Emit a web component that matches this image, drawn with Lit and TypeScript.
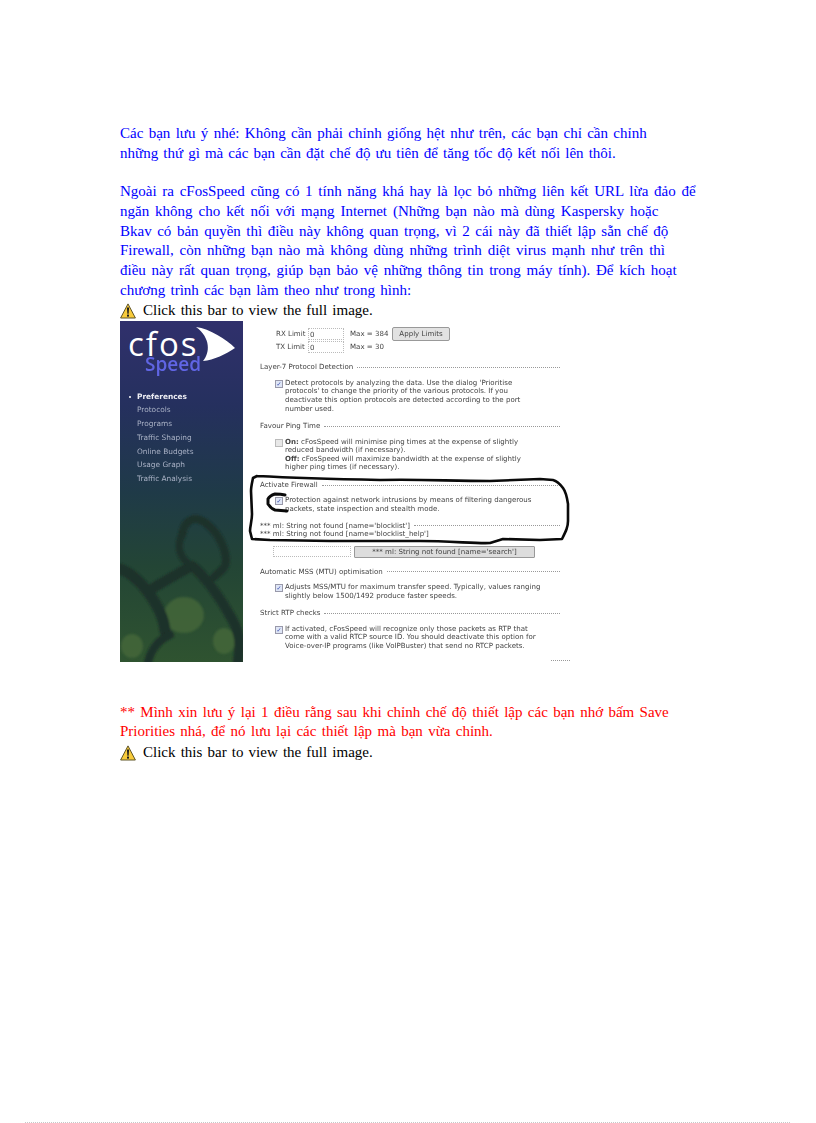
import { LitElement, html, css, svg } from "lit";
import { customElement } from "lit/decorators.js";

const warn = html`<svg class="warn" viewBox="0 0 16 16" width="16" height="16" aria-hidden="true">
  <path d="M8 .9 15.4 15H.6Z" fill="#f8cb3a" stroke="#5f5426" stroke-width="1" stroke-linejoin="round"/>
  <path d="M6.9 4.6h2.2l-.5 6.2h-1.2Z" fill="#1c1c1c"/><rect x="7" y="11.6" width="2" height="2" fill="#1c1c1c"/>
</svg>`;

const chains = svg`<svg class="art" viewBox="0 0 123 341" preserveAspectRatio="none" aria-hidden="true">
  <defs>
    <linearGradient id="bg" x1="0" y1="0" x2="0" y2="1">
      <stop offset="0" stop-color="#30306c"/>
      <stop offset=".25" stop-color="#25305e"/>
      <stop offset=".5" stop-color="#1f3a48"/>
      <stop offset=".72" stop-color="#234535"/>
      <stop offset="1" stop-color="#2f5330"/>
    </linearGradient>
    <filter id="soft"><feGaussianBlur stdDeviation="1"/></filter>
  </defs>
  <rect width="123" height="341" fill="url(#bg)"/>
  <g filter="url(#soft)">
    <g fill="#46683a" opacity=".75">
      <ellipse cx="64" cy="294" rx="20" ry="18"/>
      <ellipse cx="104" cy="320" rx="11" ry="13"/>
      <ellipse cx="12" cy="325" rx="11" ry="12"/>
    </g>
    <g fill="none" stroke="#1e3029" stroke-linecap="round" stroke-linejoin="round">
      <path d="M0 248C8 250 20 260 28 271S44 295 45 310" stroke-width="11"/>
      <path d="M28 270C42 262 58 252 72 245 84 254 100 276 112 298S118 330 118 341" stroke-width="10"/>
      <path d="M62 214C64 200 74 192 88 204S106 232 106 240 100 250 94 256" stroke-width="8"/>
      <path d="M62 214C56 226 60 238 72 245" stroke-width="7"/>
      <path d="M28 341C32 326 40 318 50 314" stroke-width="8"/>
    </g>
  </g>
</svg>`;

const scribbles = svg`<svg class="ink" viewBox="0 0 455 341" aria-hidden="true">
  <g fill="none" stroke="#0a0a0a" stroke-linecap="round" stroke-linejoin="round">
    <path stroke-width="2.6" d="M137 155 133 157C132 162 131 166 131 170L132 193C132 200 130 205 130 210L132 218 150 219 210 220 300 220C330 220 360 223 370 222L383 218 420 219 442 218C446 210 448 206 448 200V183C447 176 446 171 443 167 440 163 437 160 433 159L420 158 370 160C330 160 300 158 260 159 210 158 175 157 137 155"/>
    <path stroke-width="3" d="M165 174C161 173 158 173 155 173 152 174 149 176 148 178V183C150 186 152 188 155 189L167 190"/>
  </g>
</svg>`;

const blue: [string, number][] = [
  ["Các bạn lưu ý nhé: Không cần phải chỉnh giống hệt như trên, các bạn chỉ cần chỉnh", 1.6],
  ["những thứ gì mà các bạn cần đặt chế độ ưu tiên để tăng tốc độ kết nối lên thôi.", 1.35],
  ["", 0],
  ["Ngoài ra cFosSpeed cũng có 1 tính năng khá hay là lọc bỏ những liên kết URL lừa đảo để", 1.95],
  ["ngăn không cho kết nối với mạng Internet (Những bạn nào mà dùng Kaspersky hoặc", 2.2],
  ["Bkav có bản quyền thì điều này không quan trọng, vì 2 cái này đã thiết lập sẵn chế độ", 1.8],
  ["Firewall, còn những bạn nào mà không dùng những trình diệt virus mạnh như trên thì", 2.1],
  ["điều này rất quan trọng, giúp bạn bảo vệ những thông tin trong máy tính). Để kích hoạt", 2],
  ["chương trình các bạn làm theo như trong hình:", 1.5],
];
const red: [string, number][] = [
  ["** Mình xin lưu ý lại 1 điều rằng sau khi chỉnh chế độ thiết lập các bạn nhớ bấm Save", 1.6],
  ["Priorities nhá, để nó lưu lại các thiết lập mà bạn vừa chỉnh.", 1.6],
];

@customElement("app-root")
export class AppRoot extends LitElement {
  static styles = css`
    :host { display: block; width: 816px; height: 1123px; background: #fff; overflow: hidden; position: relative; }
    .page { padding: 124px 0 0 120px; font: 15px/19.75px "Liberation Serif", serif; }
    .line { white-space: nowrap; height: 19.75px; }
    .line.empty { height: 18.5px; }
    .blue { color: #0000ff; }
    .red { color: #ff0000; margin-bottom: 1px; }
    .bar { display: flex; align-items: center; gap: 7px; color: #000; white-space: nowrap; word-spacing: 1.4px; height: 20px; }
    .warn { flex: none; }
    .shot { display: flex; width: 455px; height: 341px; position: relative; margin-bottom: 41px; background: #fff; }
    .side { width: 123px; flex: none; position: relative; overflow: hidden; font-family: "DejaVu Sans", sans-serif; }
    .art { position: absolute; inset: 0; width: 100%; height: 100%; }
    .logo { position: absolute; left: 8px; top: 8px; color: #fff; font: 500 33px/30px "Open Sans", sans-serif; letter-spacing: 2px; }
    .speed { position: absolute; left: 25px; top: 36px; color: #6065e4; font: 600 19px/14px "Open Sans", sans-serif; filter: blur(.3px); }
    .arrow { position: absolute; left: 76px; top: 6px; }
    .menu { position: absolute; left: 17px; top: 69px; margin: 0; padding: 0; list-style: none; color: #aab2c6; font-size: 7.4px; line-height: 13.75px; white-space: nowrap; filter: blur(.35px); }
    .menu .on { color: #eeeef4; font-weight: 700; position: relative; }
    .menu .on::before { content: ""; position: absolute; left: -8px; top: 6px; width: 2px; height: 2px; background: #fff; border-radius: 50%; }
    .main { flex: 1; padding: 7px 15px 0 17px; font: 7.05px/8.6px "DejaVu Sans", sans-serif; color: #444; filter: blur(.4px); white-space: nowrap; }
    .limit { display: flex; align-items: center; height: 13px; padding-left: 16px; }
    .lbl { width: 32px; }
    .field { border: 1px dotted #bbb; padding-left: 1px; line-height: 11px; margin-right: 6px; box-sizing: border-box; height: 12px; width: 36px; }
    .max { width: 38px; }
    .btn { margin-left: 4px; height: 14px; box-sizing: border-box; width: 58px; border: 1px solid #999; border-radius: 2px; background: #e2e2e2; text-align: center; line-height: 12px; }
    .legend { display: flex; align-items: center; gap: 4px; margin-top: 8px; height: 10px; }
    .legend.first { margin-top: 9px; }
    .legend.bare { margin-top: 0; height: 8.6px; }
    .legend::after { content: ""; flex: 1; border-top: 1px dotted #999; }
    .opt { display: flex; gap: 2px; padding: 6.4px 0 0 15px; }
    .box { width: 6px; height: 6px; margin-top: 1px; flex: none; border: 1px solid #99a; background: #dfe6f6; color: #2b3fa8; font: 700 6px/6px "DejaVu Sans", sans-serif; text-align: center; overflow: hidden; }
    .box.off { background: #e8e8e8; border-color: #bbb; }
    .err { padding-top: 8px; }
    .search { display: flex; gap: 3px; margin: 7px 0 9px; padding-left: 13px; height: 12px; align-items: center; }
    .sfield { width: 78px; height: 11px; border: 1px dotted #bbb; box-sizing: border-box; }
    .sbtn { width: 181px; height: 12px; box-sizing: border-box; border: 1px solid #999; border-radius: 1px; background: #ddd; text-align: center; line-height: 10px; }
    .next { margin-top: 0; }
    .corner { position: absolute; left: 431px; bottom: 1px; width: 19px; border-top: 1px dotted #999; }
    .ink { position: absolute; left: 0; top: 0; width: 455px; height: 341px; overflow: visible; }
    .rule { position: absolute; left: 25px; right: 26px; bottom: 0; border-top: 1px dotted #c8c8c8; }
  `;

  render() {
    const opt = (t: unknown, on = true) => html`<div class="opt"><span class="box ${on ? "" : "off"}">${on ? "✓" : ""}</span><div>${t}</div></div>`;
    const lines = (rows: [string, number][]) => rows.map(([t, w]) => t
      ? html`<div class="line" style="word-spacing:${w}px">${t}</div>`
      : html`<div class="line empty"></div>`);
    return html`<div class="page">
      <div class="blue">${lines(blue)}</div>
      <div class="bar">${warn}<span>Click this bar to view the full image.</span></div>
      <div class="shot">
        <div class="side">
          ${chains}
          <div class="logo">cfos</div>
          <div class="speed">Speed</div>
          <svg class="arrow" width="40" height="36" viewBox="0 0 40 36"><path d="M0 0C14 2 30 12 39 21 30 27 18 33 7 34 14 26 15 11 0 0Z" fill="#fff"/></svg>
          <ul class="menu">
            <li class="on">Preferences</li><li>Protocols</li><li>Programs</li><li>Traffic Shaping</li><li>Online Budgets</li><li>Usage Graph</li><li>Traffic Analysis</li>
          </ul>
        </div>
        <div class="main">
          <div class="limit"><span class="lbl">RX Limit</span><span class="field">0</span><span class="max">Max = 384</span><span class="btn">Apply Limits</span></div>
          <div class="limit"><span class="lbl">TX Limit</span><span class="field">0</span><span class="max">Max = 30</span></div>
          <div class="legend first">Layer-7 Protocol Detection</div>
          ${opt(html`Detect protocols by analyzing the data. Use the dialog 'Prioritise<br>protocols' to change the priority of the various protocols. If you<br>deactivate this option protocols are detected according to the port<br>number used.`)}
          <div class="legend">Favour Ping Time</div>
          ${opt(html`<b>On:</b> cFosSpeed will minimise ping times at the expense of slightly<br>reduced bandwidth (if necessary).<br><b>Off:</b> cFosSpeed will maximize bandwidth at the expense of slightly<br>higher ping times (if necessary).`, false)}
          <div class="legend">Activate Firewall</div>
          ${opt(html`Protection against network intrusions by means of filtering dangerous<br>packets, state inspection and stealth mode.`)}
          <div class="err"><div class="legend bare">*** ml: String not found [name='blocklist']</div>*** ml: String not found [name='blocklist_help']</div>
          <div class="search"><span class="sfield"></span><span class="sbtn">*** ml: String not found [name='search']</span></div>
          <div class="legend next">Automatic MSS (MTU) optimisation</div>
          ${opt(html`Adjusts MSS/MTU for maximum transfer speed. Typically, values ranging<br>slightly below 1500/1492 produce faster speeds.`)}
          <div class="legend">Strict RTP checks</div>
          ${opt(html`If activated, cFosSpeed will recognize only those packets as RTP that<br>come with a valid RTCP source ID. You should deactivate this option for<br>Voice-over-IP programs (like VoIPBuster) that send no RTCP packets.`)}
        </div>
        <span class="corner"></span>
        ${scribbles}
      </div>
      <div class="red">${lines(red)}</div>
      <div class="bar">${warn}<span>Click this bar to view the full image.</span></div>
    </div>
    <div class="rule"></div>`;
  }
}
